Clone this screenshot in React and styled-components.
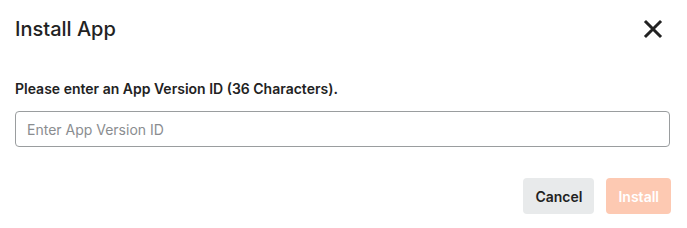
import React from 'react';
import styled, { createGlobalStyle } from 'styled-components';

const GlobalStyle = createGlobalStyle`
  body {
    margin: 0;
    background: #fff;
    font-family: Inter, "Noto Sans", sans-serif;
    color: #222;
  }
`;

const App = () => {
  return (
    <>
      <GlobalStyle />
      <Dialog>
        <Header>
          <Title>Install App</Title>
          <CloseButton aria-label="Close">
            <svg width="20" height="20" viewBox="0 0 20 20">
              <path d="M3 3 L17 17 M17 3 L3 17" stroke="#222" strokeWidth="3" strokeLinecap="square" />
            </svg>
          </CloseButton>
        </Header>
        <Body>
          <Label>Please enter an App Version ID (36 Characters).</Label>
          <Input placeholder="Enter App Version ID" />
        </Body>
        <Footer>
          <Button>Cancel</Button>
          <Button primary disabled>Install</Button>
        </Footer>
      </Dialog>
    </>
  );
};

const Dialog = styled.div`
  width: 687px;
  height: 228px;
  box-sizing: border-box;
  padding: 15px 16px 0 15px;
  display: flex;
  flex-direction: column;
`;

const Header = styled.div`
  display: flex;
  justify-content: space-between;
  align-items: center;
  height: 28px;
`;

const Title = styled.h2`
  margin: 0;
  font-size: 20px;
  font-weight: 500;
  color: #222;
`;

const CloseButton = styled.button`
  border: none;
  background: none;
  padding: 0;
  margin-right: 8px;
  display: flex;
  cursor: pointer;
`;

const Body = styled.div`
  display: flex;
  flex-direction: column;
  margin-top: 37px;
`;

const Label = styled.label`
  font-size: 14px;
  font-weight: 600;
  color: #222;
`;

const Input = styled.input`
  margin-top: 14px;
  height: 36px;
  margin-right: 1px;
  box-sizing: border-box;
  border: 1px solid #9a9d9f;
  border-radius: 4px;
  padding: 0 11px;
  font-family: inherit;
  font-size: 14px;
  color: #222;
  &::placeholder {
    color: #8a8d90;
  }
`;

const Footer = styled.div`
  display: flex;
  justify-content: flex-end;
  gap: 12px;
  margin-top: 31px;
`;

const Button = styled.button`
  height: 36px;
  padding: 0 12px;
  border: none;
  border-radius: 4px;
  font-family: inherit;
  font-size: 14px;
  font-weight: 600;
  background: ${(p) => (p.primary ? '#fdc9b2' : '#e8eaeb')};
  color: ${(p) => (p.primary ? '#fff' : '#222')};
  cursor: pointer;
  &:disabled {
    cursor: default;
  }
`;

export default App;
